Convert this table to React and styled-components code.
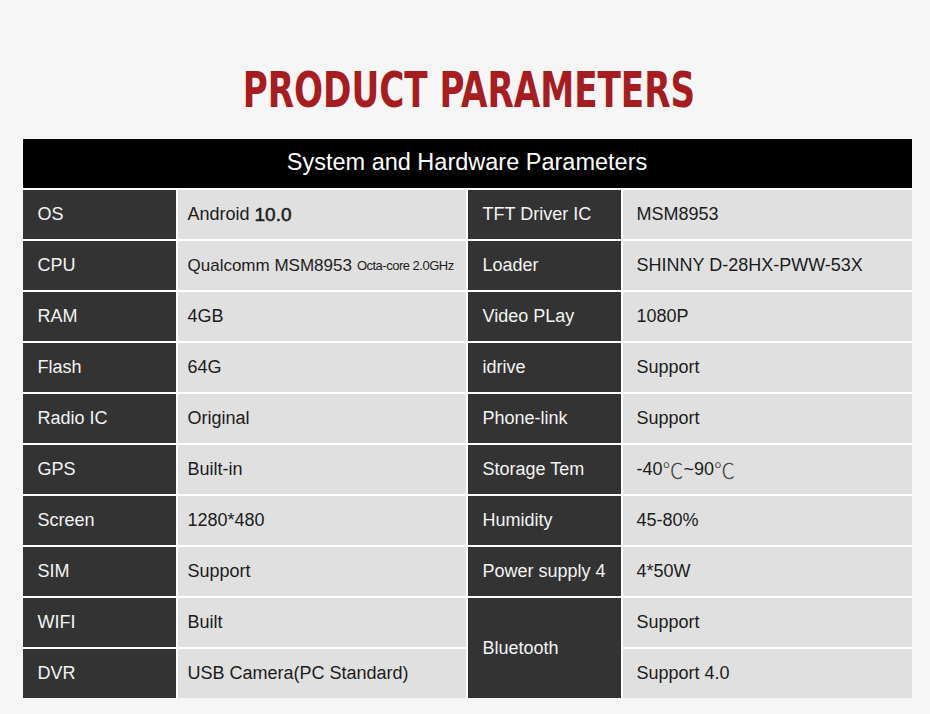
import React from "react";
import styled, { createGlobalStyle } from "styled-components";

const Global = createGlobalStyle`
  html, body { margin: 0; padding: 0; background: #f6f6f6; }
  body { font-family: "Liberation Sans", Arial, "Noto Sans CJK SC", sans-serif; }
`;

const Page = styled.div`
  width: 930px;
  height: 714px;
  background: #f6f6f6;
  display: flex;
  flex-direction: column;
  align-items: center;
  box-sizing: border-box;
  padding-top: 62px;
  padding-left: 4px;
`;

const Title = styled.h1`
  margin: 0 0 0 4px;
  height: 77px;
  font-family: "DejaVu Sans Condensed", "DejaVu Sans", sans-serif;
  font-stretch: condensed;
  font-weight: 700;
  font-size: 49px;
  line-height: 58px;
  color: #a61c1f;
  transform: scaleX(0.775);
  white-space: nowrap;
`;

const Table = styled.div`
  display: grid;
  grid-template-columns: 153px 288px 153px 289px;
  grid-auto-rows: 49px;
  gap: 2px;
  background: #ffffff;
`;

const Header = styled.div`
  grid-column: 1 / -1;
  background: #000;
  color: #fff;
  font-size: 23.5px;
  display: flex;
  align-items: center;
  justify-content: center;
  padding-bottom: 2px;
`;

const Cell = styled.div`
  display: flex;
  align-items: center;
  padding-left: ${(p) => p.$pad}px;
  font-size: 18px;
  background: ${(p) => (p.$dark ? "#333333" : "#e0e0e0")};
  color: ${(p) => (p.$dark ? "#f4f4f4" : "#1c1c1c")};
  grid-row: ${(p) => (p.$span ? `span ${p.$span}` : "auto")};
  white-space: nowrap;
`;

const Big = styled.span`
  font-size: 19px;
  margin-left: 5px;
  -webkit-text-stroke: 0.5px #1c1c1c;
`;

const Mid = styled.span`
  font-size: 17px;
`;

const Small = styled.span`
  font-size: 13px;
  margin-left: 5px;
  letter-spacing: -0.5px;
`;

const Thin = styled.span`
  font-family: "Noto Sans CJK SC", sans-serif;
  font-weight: 200;
  font-size: 21px;
  line-height: 1;
  color: #444;
`;

const rows = [
  ["OS", <>Android<Big>10.0</Big></>, "TFT Driver IC", "MSM8953"],
  ["CPU", <><Mid>Qualcomm MSM8953</Mid><Small>Octa-core 2.0GHz</Small></>, "Loader", "SHINNY D-28HX-PWW-53X"],
  ["RAM", "4GB", "Video PLay", "1080P"],
  ["Flash", "64G", "idrive", "Support"],
  ["Radio IC", "Original", "Phone-link", "Support"],
  ["GPS", "Built-in", "Storage Tem", <>-40<Thin>℃</Thin>~90<Thin>℃</Thin></>],
  ["Screen", "1280*480", "Humidity", "45-80%"],
  ["SIM", "Support", "Power supply 4", "4*50W"],
];

export default function App() {
  return (
    <>
      <Global />
      <Page>
        <Title>PRODUCT PARAMETERS</Title>
        <Table>
          <Header>System and Hardware Parameters</Header>
          {rows.map((r, i) => (
            <React.Fragment key={i}>
              <Cell $dark $pad={15}>{r[0]}</Cell>
              <Cell $pad={10}>{r[1]}</Cell>
              <Cell $dark $pad={15}>{r[2]}</Cell>
              <Cell $pad={14}>{r[3]}</Cell>
            </React.Fragment>
          ))}
          <Cell $dark $pad={15}>WIFI</Cell>
          <Cell $pad={10}>Built</Cell>
          <Cell $dark $pad={15} $span={2}>Bluetooth</Cell>
          <Cell $pad={14}>Support</Cell>
          <Cell $dark $pad={15}>DVR</Cell>
          <Cell $pad={10}>USB Camera(PC Standard)</Cell>
          <Cell $pad={14}>Support 4.0</Cell>
        </Table>
      </Page>
    </>
  );
}
